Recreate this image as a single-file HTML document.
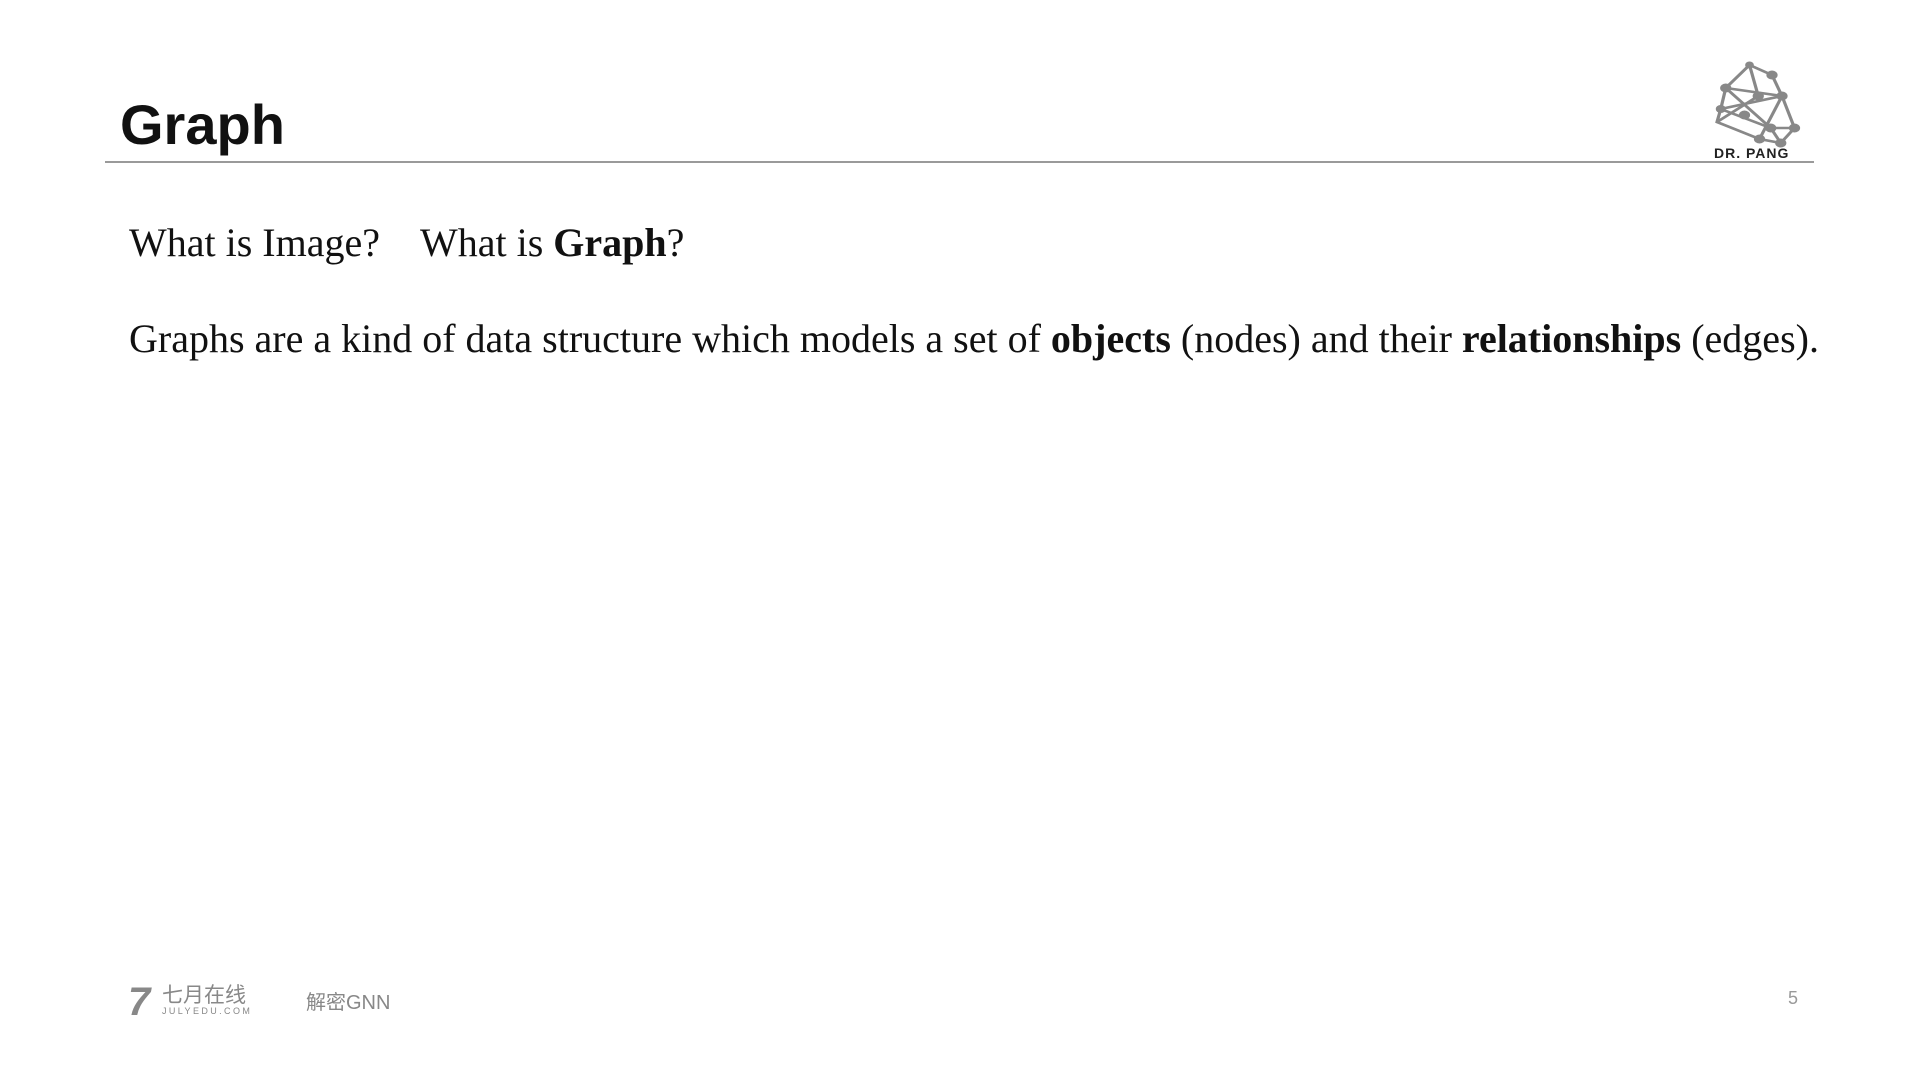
<!DOCTYPE html>
<html><head><meta charset="utf-8"><style>
body{margin:0;width:1920px;height:1080px;background:#fff;position:relative;overflow:hidden;font-family:"Liberation Sans",sans-serif}
.a{position:absolute;white-space:nowrap}
.t{font-family:"Liberation Serif",serif;font-size:40px;color:#111}
</style></head><body>
<div class="a" style="left:120px;top:92px;font-size:56px;font-weight:bold;color:#111">Graph</div>
<div class="a" style="left:105px;top:161px;width:1709px;height:2px;background:#9a9a9a"></div>
<div class="a t" style="left:129px;top:219px">What is Image?&nbsp;&nbsp;&nbsp;&nbsp;What is <b>Graph</b>?</div>
<div class="a t" style="left:129px;top:315px">Graphs are a kind of data structure which models a set of <b>objects</b> (nodes) and their <b>relationships</b> (edges).</div>
<svg class="a" style="left:1712px;top:56px" width="100" height="108" viewBox="0 0 100 108">
<g transform="scale(1.25,1.0)">
<g stroke="#888" stroke-width="2.6" fill="none">
<polyline points="30,9 48,19 56,40 66,72 55,87 38,83 4,66 7,53 11,32 30,9"/>
<line x1="11" y1="32" x2="56" y2="40"/><line x1="11" y1="32" x2="47" y2="72"/><line x1="30" y1="9" x2="37" y2="40"/>
<line x1="7" y1="53" x2="47" y2="72"/><line x1="7" y1="53" x2="56" y2="40"/><line x1="47" y1="72" x2="66" y2="72"/>
<line x1="56" y1="40" x2="38" y2="83"/><line x1="4" y1="66" x2="37" y2="40"/><line x1="47" y1="72" x2="55" y2="87"/>
</g>
<g fill="#888"><circle cx="30" cy="9" r="3.5"/><circle cx="48" cy="19" r="4.5"/><circle cx="11" cy="32" r="4.5"/><circle cx="37" cy="40" r="4.5"/><circle cx="56" cy="40" r="4.5"/><circle cx="7" cy="53" r="4"/><circle cx="26" cy="59" r="4.5"/><circle cx="47" cy="72" r="4.5"/><circle cx="66" cy="72" r="4.5"/><circle cx="38" cy="83" r="4.5"/><circle cx="55" cy="87" r="4.5"/></g>
</g>
<text x="2" y="102" font-family="Liberation Sans" font-weight="bold" font-size="14" letter-spacing="1" fill="#222">DR. PANG</text>
</svg>
<div class="a" style="left:128px;top:980px;font-size:40px;font-weight:bold;font-style:italic;color:#888">7</div>
<div class="a" style="left:162px;top:979px;font-size:21px;color:#888;font-family:'Liberation Sans','Noto Sans CJK SC',sans-serif">七月在线</div>
<div class="a" style="left:162px;top:1006px;font-size:9px;letter-spacing:2.4px;color:#888">JULYEDU.COM</div>
<div class="a" style="left:306px;top:986px;font-size:20px;color:#888;font-family:'Liberation Sans','Noto Sans CJK SC',sans-serif">解密GNN</div>
<div class="a" style="left:1788px;top:988px;font-size:18px;color:#999">5</div>
</body></html>
